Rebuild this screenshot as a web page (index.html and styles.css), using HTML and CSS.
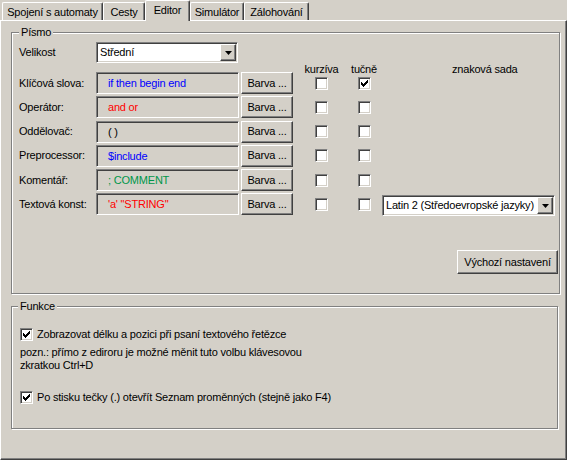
FILE: index.html
```html
<!DOCTYPE html>
<html lang="cs">
<head>
<meta charset="utf-8">
<title>Editor</title>
<link rel="stylesheet" href="styles.css">
</head>
<body>
<div class="window">
  <div class="tabs">
    <div class="tab tab-conn">Spojení s automaty</div>
    <div class="tab tab-paths">Cesty</div>
    <div class="tab tab-editor active">Editor</div>
    <div class="tab tab-sim">Simulátor</div>
    <div class="tab tab-backup">Zálohování</div>
  </div>
  <div class="page">
    <section class="group group-font">
      <div class="group-title">Písmo</div>
      <div class="size-row">
        <span class="lbl">Velikost</span>
        <div class="combo combo-size">
          <span class="combo-text">Střední</span>
          <span class="drop-btn"><svg width="7" height="4" viewBox="0 0 7 4"><polygon points="0,0 7,0 3.5,4" fill="#000"/></svg></span>
        </div>
      </div>
      <div class="head-row">
        <span class="h-italic">kurzíva</span>
        <span class="h-bold">tučně</span>
        <span class="h-set">znaková sada</span>
      </div>
      <div class="rows">
        <span class="lbl">Klíčová slova:</span>
        <div class="field c-blue">if then begin end</div>
        <button class="btn btn-color">Barva ...</button>
        <span class="cb"></span>
        <span class="cb checked"><svg width="7" height="7" viewBox="0 0 7 7" shape-rendering="crispEdges"><polygon points="0,2 2,4 6,0 7,0 7,3 2,7 0,5" fill="#000"/></svg></span>
        <span></span>

        <span class="lbl">Operátor:</span>
        <div class="field c-red">and or</div>
        <button class="btn btn-color">Barva ...</button>
        <span class="cb"></span>
        <span class="cb"></span>
        <span></span>

        <span class="lbl">Oddělovač:</span>
        <div class="field c-black">( )</div>
        <button class="btn btn-color">Barva ...</button>
        <span class="cb"></span>
        <span class="cb"></span>
        <span></span>

        <span class="lbl">Preprocessor:</span>
        <div class="field c-blue">$include</div>
        <button class="btn btn-color">Barva ...</button>
        <span class="cb"></span>
        <span class="cb"></span>
        <span></span>

        <span class="lbl">Komentář:</span>
        <div class="field c-green">; COMMENT</div>
        <button class="btn btn-color">Barva ...</button>
        <span class="cb"></span>
        <span class="cb"></span>
        <span></span>

        <span class="lbl">Textová konst:</span>
        <div class="field c-red">'a' "STRING"</div>
        <button class="btn btn-color">Barva ...</button>
        <span class="cb"></span>
        <span class="cb"></span>
        <div class="combo combo-charset">
          <span class="combo-text">Latin 2 (Středoevropské jazyky)</span>
          <span class="drop-btn"><svg width="7" height="4" viewBox="0 0 7 4"><polygon points="0,0 7,0 3.5,4" fill="#000"/></svg></span>
        </div>
      </div>
      <button class="btn btn-default">Výchozí nastavení</button>
    </section>

    <section class="group group-func">
      <div class="group-title">Funkce</div>
      <div class="check-row first">
        <span class="cb checked"><svg width="7" height="7" viewBox="0 0 7 7" shape-rendering="crispEdges"><polygon points="0,2 2,4 6,0 7,0 7,3 2,7 0,5" fill="#000"/></svg></span>
        <span>Zobrazovat délku a pozici při psaní textového řetězce</span>
      </div>
      <p class="note">pozn.: přímo z ediroru je možné měnit tuto volbu klávesovou<br>zkratkou Ctrl+D</p>
      <div class="check-row second">
        <span class="cb checked"><svg width="7" height="7" viewBox="0 0 7 7" shape-rendering="crispEdges"><polygon points="0,2 2,4 6,0 7,0 7,3 2,7 0,5" fill="#000"/></svg></span>
        <span>Po stisku tečky (.) otevřít Seznam proměnných (stejně jako F4)</span>
      </div>
    </section>
  </div>
</div>
</body>
</html>
```

FILE: styles.css
```css
* {
  box-sizing: border-box;
}

html, body {
  margin: 0;
  padding: 0;
  background: #d4d0c8;
}

body {
  font-family: "Liberation Sans", Arial, sans-serif;
  font-size: 11px;
  line-height: 13px;
  letter-spacing: -0.2px;
  color: #000;
}

.window {
  width: 567px;
  height: 460px;
  overflow: hidden;
}

/* ---------- tabs ---------- */
.tabs {
  display: flex;
  align-items: flex-end;
  height: 20px;
  padding-left: 2px;
}

.tab {
  height: 18px;
  padding-top: 3px;
  text-align: center;
  white-space: nowrap;
  background: #d4d0c8;
  border-top: 1px solid #fff;
  border-left: 1px solid #fff;
  border-right: 1px solid #404040;
  border-radius: 2px 2px 0 0;
  box-shadow: inset -1px 0 0 #808080;
}

.tab-conn { width: 101px; }
.tab-paths { width: 42px; }
.tab-editor { width: 45px; }
.tab-sim { width: 54px; }
.tab-backup { width: 65px; }

.tab.active {
  position: relative;
  z-index: 1;
  height: 21px;
  margin-bottom: -1px;
  padding-top: 3px;
}

/* ---------- page ---------- */
.page {
  height: 440px;
  border-top: 1px solid #fff;
  border-left: 1px solid #fff;
  border-right: 1px solid #404040;
  border-bottom: 1px solid #404040;
  box-shadow: inset -1px -1px 0 #808080;
  padding: 11px 0 0 10px;
}

/* ---------- group boxes ---------- */
.group {
  border: 1px solid #808080;
  box-shadow: inset 1px 1px 0 #fff, 1px 1px 0 #fff;
}

.group-title {
  width: max-content;
  margin-top: -7px;
  padding: 0 2px;
  background: #d4d0c8;
  line-height: 13px;
}

.group-font {
  width: 549px;
  height: 262px;
  display: flex;
  flex-direction: column;
  padding: 0 1px 0 7px;
}

.group-func {
  width: 547px;
  height: 123px;
  margin-top: 12px;
  padding: 0 0 0 8px;
}

.group-func .group-title {
  margin-left: -2px;
}

/* ---------- font rows ---------- */
.size-row {
  display: flex;
  align-items: center;
  height: 21px;
  margin-top: 3px;
}

.size-row .lbl {
  width: 77px;
}

.head-row,
.rows {
  display: grid;
  grid-template-columns: 77px 145px 52px 57px 28px 1fr;
}

.head-row {
  height: 9px;
}

.head-row span {
  align-self: end;
  white-space: nowrap;
  line-height: 13px;
}

.h-italic {
  grid-column: 4;
  text-align: center;
}

.h-bold {
  grid-column: 5;
  text-align: center;
}

.h-set {
  grid-column: 6;
  padding-left: 74px;
}

.rows {
  grid-auto-rows: 22px;
  row-gap: 2.3px;
}

.rows .lbl {
  align-self: center;
  white-space: nowrap;
}

.field {
  width: 143px;
  height: 22px;
  padding-left: 11px;
  line-height: 20px;
  white-space: nowrap;
  background: #d4d0c8;
  border-top: 1px solid #808080;
  border-left: 1px solid #808080;
  border-bottom: 1px solid #fff;
  border-right: 1px solid #fff;
  box-shadow: inset 1px 1px 0 #404040, inset -1px -1px 0 #d4d0c8;
}

.c-blue { color: #0000ff; }
.c-red { color: #ff0000; }
.c-black { color: #000; }
.c-green { color: #00964a; }

/* ---------- buttons ---------- */
.btn {
  font: inherit;
  letter-spacing: inherit;
  color: #000;
  background: #d4d0c8;
  margin: 0;
  padding: 0;
  border-top: 1px solid #fff;
  border-left: 1px solid #fff;
  border-right: 1px solid #404040;
  border-bottom: 1px solid #404040;
  box-shadow: inset -1px -1px 0 #808080;
  border-radius: 0;
  white-space: nowrap;
}

.btn-color {
  width: 52px;
  height: 22px;
}

.btn-default {
  align-self: flex-end;
  width: 101px;
  height: 24px;
  margin-top: 35px;
}

/* ---------- checkboxes ---------- */
.cb {
  width: 13px;
  height: 13px;
  display: flex;
  align-items: center;
  justify-content: center;
  background: #fff;
  border-top: 1px solid #808080;
  border-left: 1px solid #808080;
  border-bottom: 1px solid #fff;
  border-right: 1px solid #fff;
  box-shadow: inset 1px 1px 0 #404040, inset -1px -1px 0 #d4d0c8;
}

.rows .cb {
  justify-self: center;
  align-self: center;
}

/* ---------- combo boxes ---------- */
.combo {
  display: flex;
  align-items: stretch;
  height: 21px;
  background: #fff;
  border-top: 1px solid #808080;
  border-left: 1px solid #808080;
  border-bottom: 1px solid #fff;
  border-right: 1px solid #fff;
  box-shadow: inset 1px 1px 0 #404040, inset -1px -1px 0 #d4d0c8;
  padding: 1px;
}

.combo-text {
  flex: 1;
  overflow: hidden;
  white-space: nowrap;
  padding-left: 2px;
  line-height: 17px;
}

.drop-btn {
  width: 16px;
  flex: none;
  display: flex;
  align-items: center;
  justify-content: center;
  background: #d4d0c8;
  border-top: 1px solid #fff;
  border-left: 1px solid #fff;
  border-right: 1px solid #404040;
  border-bottom: 1px solid #404040;
  box-shadow: inset -1px -1px 0 #808080;
}

.combo-size {
  width: 142px;
}

.combo-charset {
  width: 173px;
  margin-left: 4px;
  align-self: end;
  margin-bottom: -1px;
}

/* ---------- functions group ---------- */
.check-row {
  display: flex;
  align-items: center;
  gap: 4px;
  height: 13px;
  white-space: nowrap;
}

.check-row.first {
  margin-top: 15px;
}

.note {
  margin: 5px 0 0;
  line-height: 13px;
}

.check-row.second {
  margin-top: 19px;
}
```
